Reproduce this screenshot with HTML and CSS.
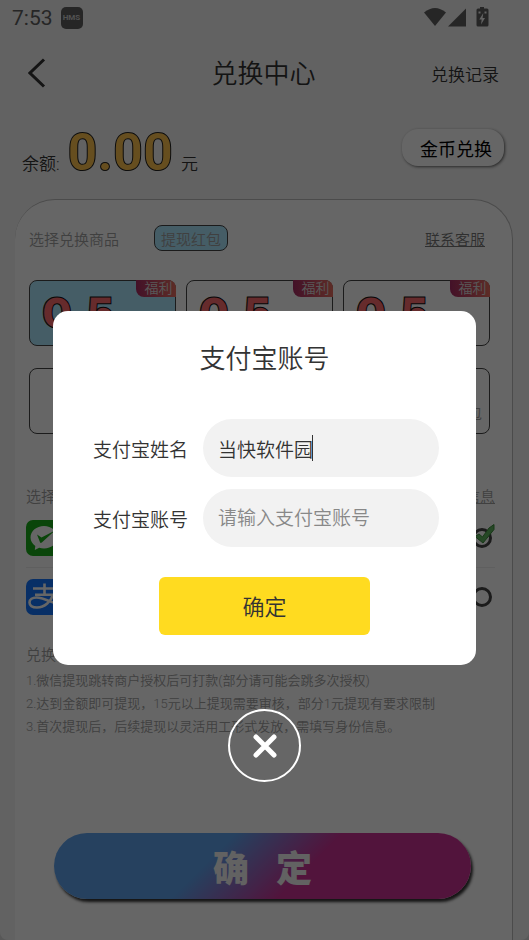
FILE: index.html
```html
<!DOCTYPE html>
<html lang="zh-CN">
<head>
<meta charset="utf-8">
<meta name="viewport" content="width=device-width, initial-scale=1">
<title>兑换中心</title>
<link rel="stylesheet" href="styles.css">
</head>
<body>
<div class="page">
  <div class="status">
    <span class="clock">7:53</span>
    <span class="hms">HMS</span>
    <svg class="status-icons" width="66" height="20" viewBox="0 0 66 20" aria-hidden="true">
      <path d="M0 4.5Q11 -4.5 22 4.5L11 18Z"/>
      <path d="M24 18.5L42 .5V18.500Z"/>
      <path fill-rule="evenodd" d="M56 -1h4v1.500h3q1.500 0 1.500 1.500v15q0 1.500-1.500 1.500h-9q-1.500 0-1.500-1.500v-15q0-1.500 1.500-1.500h2zM59.300 5l-4 6.500h2.400l-.700 5 4-6.500h-2.400zM54.500 3.500v2h2v-2zM60.500 3.500v2h2v-2z"/>
    </svg>
  </div>
  <header class="header">
    <button class="back" type="button" aria-label="返回">
      <svg width="18" height="30" viewBox="0 0 18 30" aria-hidden="true"><path d="M16 1.500L2 15L16 28.500"/></svg>
    </button>
    <h1>兑换中心</h1>
    <a class="history" href="#history">兑换记录</a>
  </header>
  <section class="balance">
    <span class="unit">余额:</span>
    <strong class="amount">0.00</strong>
    <span class="unit">元</span>
    <button class="coin" type="button">金币兑换</button>
  </section>
  <main class="panel">
    <div class="choose">
      <span>选择兑换商品</span>
      <button class="tag" type="button">提现红包</button>
      <a class="service" href="#service">联系客服</a>
    </div>
    <div class="goods">
      <button class="card selected" type="button"><span class="badge">福利</span><b>0.5</b></button>
      <button class="card" type="button"><span class="badge">福利</span><b>0.5</b></button>
      <button class="card" type="button"><span class="badge">福利</span><b>0.5</b></button>
      <button class="card wide" type="button"><span class="kind">提现红包</span></button>
    </div>
    <div class="pay">
      <div class="pay-head"><span>选择提现方式</span><a href="#info">完善信息</a></div>
      <label class="method">
        <svg width="36" height="36" viewBox="0 0 36 36" aria-hidden="true">
          <rect width="36" height="36" rx="7" fill="#19ad19"/>
          <path fill="#fff" d="M18 6C10.500 6 4.500 11 4.500 17.500c0 3.500 2 6.500 4.800 8.600L8.800 30l4.400-2.300c1.500.4 3.100.7 4.800.7 7.500 0 13.500-5 13.500-11.200S25.500 6 18 6z"/>
          <path fill="#19ad19" d="M11 14.500l4.500 3L29 10.500 15.800 22.500q-1.200 1-1.800-.3z"/>
        </svg>
        <span>微信</span>
        <span class="pick"><input type="radio" name="pay" checked>
          <svg class="tick" width="20" height="20" viewBox="0 0 20 20" aria-hidden="true"><path d="M0 12.500L4 10 7.500 13 14 4 19 .5V5.500L8 19Z"/></svg>
        </span>
      </label>
      <label class="method">
        <svg width="36" height="36" viewBox="0 0 36 36" aria-hidden="true">
          <rect width="36" height="36" rx="7" fill="#1677ff"/>
          <path fill="none" stroke="#fff" stroke-width="2.600" d="M7 9.500h23M9 15.800h19M18.500 4.500v11.300M27 16c-2 6-8 12.500-16 12.500-5 0-7.500-2-7.500-5s3-5 7-5c6 0 12 3.500 25.500 8.500"/>
        </svg>
        <span>支付宝</span>
        <span class="pick"><input type="radio" name="pay"></span>
      </label>
    </div>
    <section class="notes">
      <h2>兑换说明</h2>
      <p>1.微信提现跳转商户授权后可打款(部分请可能会跳多次授权)</p>
      <p>2.达到金额即可提现，15元以上提现需要审核，部分1元提现有要求限制</p>
      <p>3.首次提现后，后续提现以灵活用工形式发放，需填写身份信息。</p>
    </section>
    <button class="submit" type="button"><span>确</span><span>定</span></button>
  </main>
</div>
<div class="overlay">
  <form class="dialog" role="dialog" aria-labelledby="dialog-title">
    <h2 id="dialog-title">支付宝账号</h2>
    <div class="field">
      <label for="name">支付宝姓名</label>
      <div class="box"><input id="name" type="text" value="当快软件园"><i class="caret"></i></div>
    </div>
    <div class="field">
      <label for="account">支付宝账号</label>
      <div class="box"><input id="account" type="text" placeholder="请输入支付宝账号"></div>
    </div>
    <button class="confirm" type="button">确定</button>
  </form>
  <button class="close" type="button" aria-label="关闭">
    <svg width="24" height="24" viewBox="0 0 24 24" aria-hidden="true"><path d="M3 3L21 21M21 3L3 21"/></svg>
  </button>
</div>
</body>
</html>
```
FILE: styles.css
```css
* { box-sizing: border-box; }
html { background: #ddd; }
body {
  margin: 0;
  font-family: Roboto, "Noto Sans CJK SC", sans-serif;
  font-weight: 350;
  color: #333;
}
button, input { font: inherit; color: inherit; }
button { padding: 0; border: 0; background: none; }
a { color: inherit; }
h1, h2, p { margin: 0; font-weight: inherit; }

.page {
  display: flex;
  flex-direction: column;
  min-height: 100vh;
  background: #f5f5f5;
  border-radius: 0 0 8px 8px;
}

.status {
  display: flex;
  align-items: center;
  gap: 8px;
  height: 36px;
  padding: 0 39px 0 12px;
  color: #606060;
}
.clock { font-size: 21px; font-weight: 400; }
.hms {
  width: 22px;
  height: 22px;
  border-radius: 5px;
  background: #606060;
  color: #ccc;
  font-size: 8px;
  font-weight: 700;
  line-height: 22px;
  text-align: center;
}
.status-icons { margin-left: auto; fill: #606060; overflow: visible; }

.header {
  display: grid;
  grid-template-columns: 1fr auto 1fr;
  align-items: center;
  height: 74px;
  padding: 0 30px 0 28px;
}
.back { justify-self: start; height: 30px; }
.back path { fill: none; stroke: #333; stroke-width: 3; }
h1 { font-size: 26px; line-height: 36px; padding-top: 2px; }
.history { justify-self: end; font-size: 17px; text-decoration: none; }

.balance {
  display: flex;
  align-items: baseline;
  gap: 8px;
  height: 89px;
  padding: 13px 25px 0 22px;
}
.unit { font-size: 17px; }
.amount {
  color: #ffc34e;
  font-size: 52px;
  font-weight: 800;
  line-height: 60px;
  -webkit-text-stroke: 1px #222;
}
.coin {
  width: 102px;
  height: 37px;
  margin: 6px 0 0 auto;
  padding-left: 6px;
  align-self: flex-start;
  border-radius: 16px;
  background: #fff;
  box-shadow: 1px 1px 3px #666;
  color: #000;
  font-size: 18px;
  font-weight: 400;
}

.panel {
  flex: 1;
  display: flex;
  flex-direction: column;
  margin: 0 16px 0 15px;
  padding: 25px 17px 41px 11px;
  border: solid #bbb;
  border-width: 1px 1px 0 0;
  border-radius: 40px 40px 0 0;
  background: #fff;
  color: #a0a0a0;
  font-size: 15px;
}
.choose {
  display: flex;
  align-items: center;
  height: 26px;
  padding: 0 10px 0 3px;
}
.tag {
  width: 74px;
  height: 26px;
  margin-left: 35px;
  border: 1px solid #444;
  border-radius: 8px;
  background: #ade8ff;
}
.service { margin-left: auto; color: #777; }

.goods {
  display: grid;
  grid-template-columns: repeat(3, 1fr);
  gap: 22px 10px;
  margin: 29px 5px 0 3px;
}
.card {
  position: relative;
  height: 66px;
  padding: 0 12px;
  border: 1px solid #444;
  border-radius: 8px;
  text-align: left;
}
.selected { background: #ade8ff; }
.wide { grid-column: span 3; }
.card b {
  color: #ff6b6e;
  font-family: Inter, Roboto, sans-serif;
  font-size: 42px;
  font-weight: 900;
  line-height: 50px;
  -webkit-text-stroke: 1px #111;
}
.badge {
  position: absolute;
  top: -1px;
  right: -1px;
  width: 40px;
  height: 17px;
  padding-left: 5px;
  border-radius: 0 8px 0 8px;
  background: linear-gradient(90deg, #a82c64, #e86e60);
  color: #ddd;
  font-size: 14px;
  line-height: 16px;
  text-align: center;
}
.kind { display: block; padding-top: 22px; text-align: right; margin-right: -5px; }

.pay { margin-top: 51px; }
.pay-head { display: flex; justify-content: space-between; height: 24px; line-height: 24px; }
.method {
  display: flex;
  align-items: center;
  gap: 10px;
  height: 58px;
}
.method + .method { border-top: 1px solid #eee; }
.pick { position: relative; margin: 0 3px 0 auto; height: 20px; }
.pick input {
  display: block;
  appearance: none;
  width: 20px;
  height: 20px;
  margin: 0;
  border: 3px solid #444;
  border-radius: 50%;
}
.tick { position: absolute; left: 3px; top: -4px; fill: #5fb45f; stroke: #3c8c3c; stroke-width: 1; }

.notes { margin-top: 16px; font-size: 13px; line-height: 23px; }
.notes h2 { font-size: 15px; line-height: 28px; }

.submit {
  display: flex;
  justify-content: center;
  align-items: center;
  gap: 27px;
  height: 66px;
  margin: auto 24px 0 28px;
  border-radius: 33px;
  background: linear-gradient(135deg, #5fa2ed 38%, #cd3296 60%);
  box-shadow: 2px 3px 3px #333;
  color: #f5f5f5;
  font-size: 36px;
  font-weight: 900;
}

.overlay {
  position: fixed;
  inset: 0;
  display: flex;
  flex-direction: column;
  align-items: center;
  padding-top: 311px;
  background: rgba(0, 0, 0, .6);
}
.dialog {
  display: flex;
  flex-direction: column;
  gap: 12px;
  width: 80%;
  padding: 28px 37px 30px;
  border-radius: 15px;
  background: #fff;
}
.dialog h2 { margin-bottom: 28px; font-size: 26px; line-height: 40px; text-align: center; }
.field { display: flex; align-items: center; gap: 15px; padding-left: 3px; font-size: 19px; }
.box { position: relative; flex: 1; }
.box input {
  display: block;
  width: 100%;
  height: 58px;
  padding: 0 15px;
  border: 0;
  border-radius: 29px;
  background: #f2f2f2;
}
.box input::placeholder { color: #888; }
.caret { position: absolute; left: 109px; top: 16px; width: 1px; height: 26px; background: #333; }
.confirm {
  width: 211px;
  height: 58px;
  margin-top: 18px;
  padding-bottom: 2px;
  align-self: center;
  border-radius: 6px;
  background: #ffdb20;
  font-size: 22px;
}
.close {
  display: grid;
  place-items: center;
  width: 73px;
  height: 73px;
  margin-top: 44px;
  border: 2px solid #fff;
  border-radius: 50%;
}
.close path { stroke: #fff; stroke-width: 5; stroke-linecap: round; }
```
